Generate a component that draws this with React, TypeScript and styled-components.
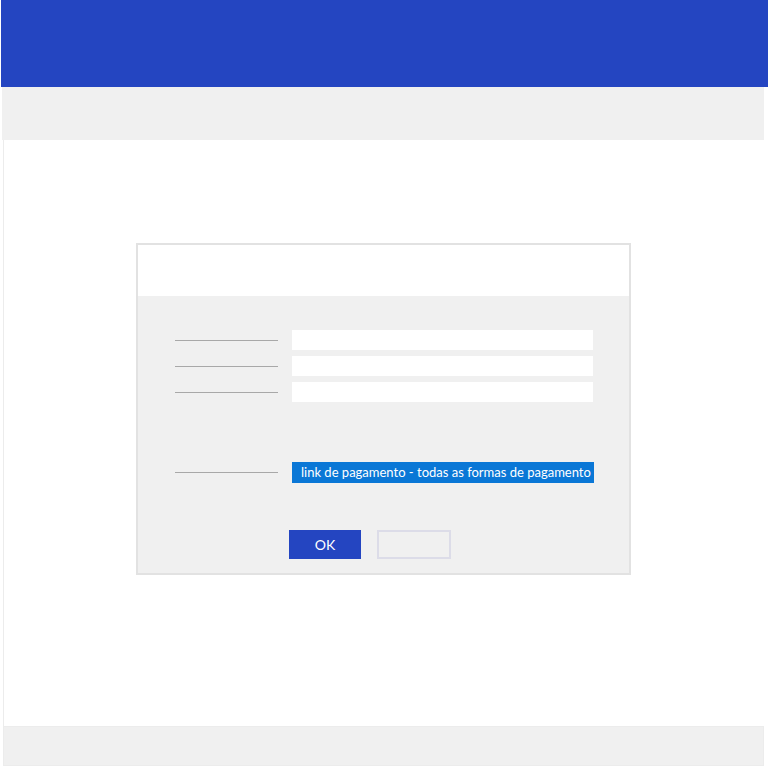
import styled, { createGlobalStyle } from "styled-components";

const GlobalStyle = createGlobalStyle`
  html, body {
    margin: 0;
    padding: 0;
    background: #ffffff;
    font-family: Lato, "Open Sans", "Liberation Sans", sans-serif;
  }
`;

const Page = styled.div`
  width: 768px;
  height: 768px;
  display: flex;
  flex-direction: column;
  background: #ffffff;
`;

const TopBar = styled.header`
  height: 87px;
  margin-left: 1px;
  background: #2445c1;
`;

const SubBar = styled.div`
  height: 53px;
  margin: 0 4px 0 2px;
  background: #f0f0f0;
`;

const Main = styled.main`
  height: 586px;
  margin: 0 4px 0 3px;
  border-left: 1px solid #ececec;
  display: flex;
  flex-direction: column;
  padding: 103px 0 0 132px;
  box-sizing: border-box;
`;

const Footer = styled.footer`
  height: 40px;
  margin: 0 4px 0 3px;
  background: #f0f0f0;
  border: 1px solid #ececec;
  box-sizing: border-box;
`;

const Dialog = styled.section`
  width: 495px;
  height: 332px;
  box-sizing: border-box;
  border: 2px solid #e2e2e2;
  display: flex;
  flex-direction: column;
`;

const DialogHead = styled.div`
  height: 51px;
  background: #ffffff;
`;

const DialogBody = styled.div`
  flex: 1;
  background: #f0f0f0;
  padding: 34px 0 0 37px;
  display: flex;
  flex-direction: column;
`;

const Fields = styled.div`
  display: flex;
  flex-direction: column;
  gap: 6px;
`;

const Row = styled.div`
  display: grid;
  grid-template-columns: 103px 301px;
  column-gap: 14px;
  align-items: center;
`;

const Label = styled.span`
  height: 1px;
  background: #a8a8a8;
`;

const Input = styled.div`
  height: 20px;
  background: #ffffff;
`;

const SelectRow = styled(Row)`
  margin-top: 60px;
  grid-template-columns: 103px 302px;
`;

const Option = styled.div`
  height: 21px;
  background: #0a77d6;
  color: #ffffff;
  font-family: Lato, "Open Sans", sans-serif;
  font-size: 13px;
  line-height: 21px;
  padding-left: 9px;
  white-space: nowrap;
  overflow: hidden;
`;

const Actions = styled.div`
  display: flex;
  gap: 16px;
  margin: 47px 0 0 114px;
`;

const Button = styled.button<{ $primary?: boolean }>`
  width: ${(p) => (p.$primary ? "72px" : "74px")};
  height: 29px;
  box-sizing: border-box;
  border: ${(p) => (p.$primary ? "none" : "2px solid #dcdce8")};
  background: ${(p) => (p.$primary ? "#2445c1" : "#f0f0f0")};
  color: #ffffff;
  font-family: Lato, "Open Sans", sans-serif;
  font-size: 14px;
  padding: 0;
`;

export default function App() {
  return (
    <>
      <GlobalStyle />
      <Page>
        <TopBar />
        <SubBar />
        <Main>
          <Dialog>
            <DialogHead />
            <DialogBody>
              <Fields>
                {[0, 1, 2].map((i) => (
                  <Row key={i}>
                    <Label />
                    <Input />
                  </Row>
                ))}
              </Fields>
              <SelectRow>
                <Label />
                <Option>link de pagamento - todas as formas de pagamento</Option>
              </SelectRow>
              <Actions>
                <Button $primary>OK</Button>
                <Button />
              </Actions>
            </DialogBody>
          </Dialog>
        </Main>
        <Footer />
      </Page>
    </>
  );
}
